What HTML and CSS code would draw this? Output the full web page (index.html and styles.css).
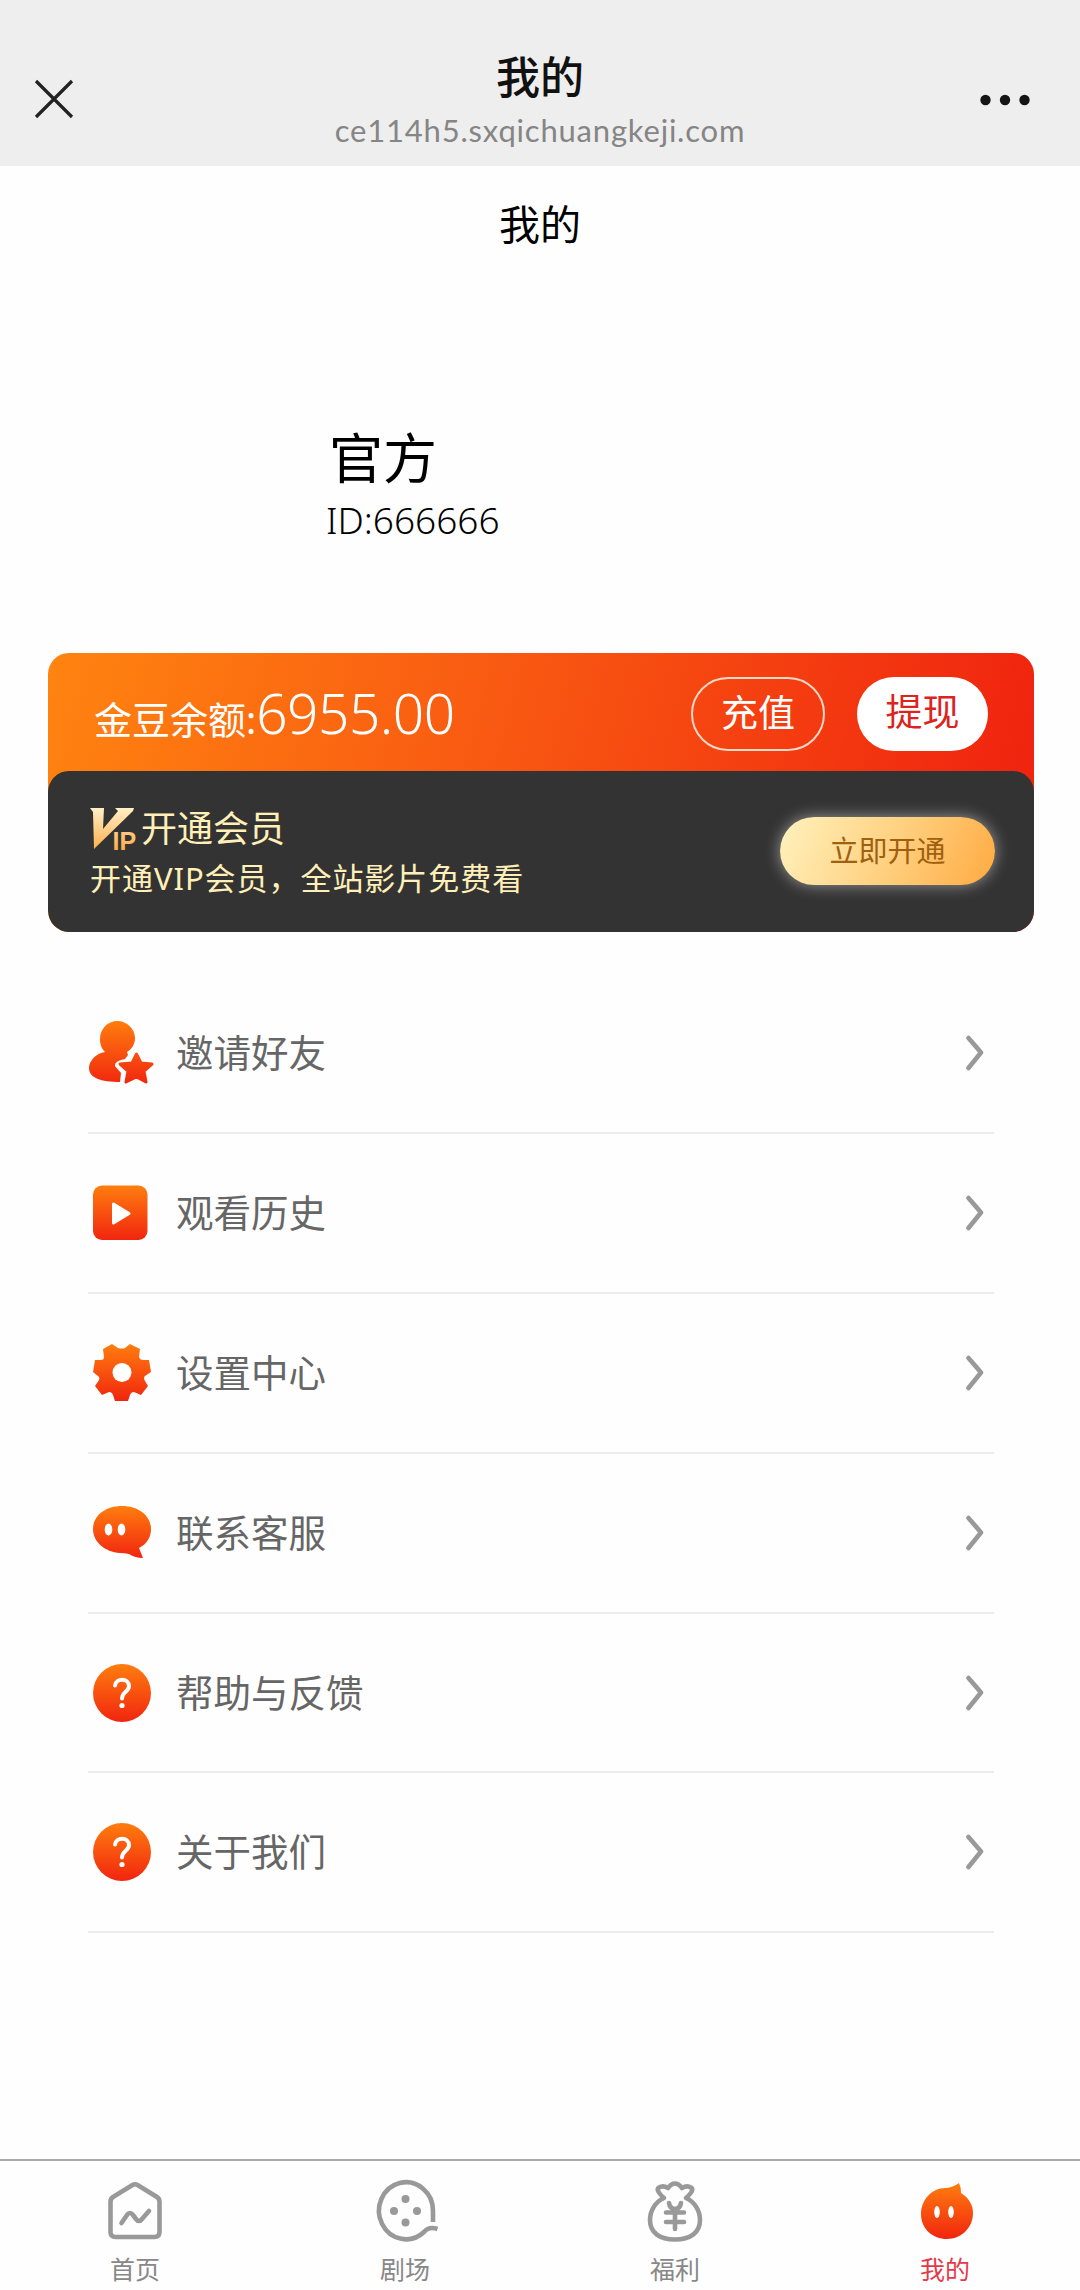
FILE: index.html
```html
<!DOCTYPE html>
<html lang="zh-CN">
<head>
<meta charset="utf-8">
<title>我的</title>
<link rel="stylesheet" href="styles.css">
</head>
<body>
<svg class="defs" width="0" height="0" aria-hidden="true">
  <defs>
    <linearGradient id="fire" x1="0" y1="0" x2="0" y2="1"><stop offset="0" stop-color="#ff7d0e"/><stop offset="1" stop-color="#f1250f"/></linearGradient>
    <linearGradient id="person" gradientUnits="userSpaceOnUse" x1="0" y1="0" x2="0" y2="64"><stop offset="0" stop-color="#ff7d0e"/><stop offset="1" stop-color="#f1250f"/></linearGradient>
    <linearGradient id="gold" gradientUnits="userSpaceOnUse" x1="0" y1="0" x2="0" y2="42"><stop offset="0" stop-color="#fff0c8"/><stop offset="1" stop-color="#ffac4a"/></linearGradient>
  </defs>
</svg>
<header class="browser">
  <svg class="close" viewBox="0 0 40 40"><path d="M2 2L38 38M38 2L2 38"/></svg>
  <div class="heading">
    <div class="heading-title">我的</div>
    <div class="heading-url">ce114h5.sxqichuangkeji.com</div>
  </div>
  <svg class="more" viewBox="0 0 50 12"><circle cx="5.500" cy="6" r="5.200"/><circle cx="25" cy="6" r="5.200"/><circle cx="44.500" cy="6" r="5.200"/></svg>
</header>
<h1 class="page-title">我的</h1>
<section class="profile">
  <div class="name">官方</div>
  <div class="uid">ID:666666</div>
</section>
<section class="wallet">
  <div class="balance">
    <div class="amount"><span class="amount-label">金豆余额:</span><span class="amount-value">6955.00</span></div>
    <button class="pill recharge">充值</button>
    <button class="pill withdraw">提现</button>
  </div>
  <div class="vip">
    <div class="vip-copy">
      <div class="vip-title">
        <svg class="vip-icon" viewBox="0 0 45 42"><path fill="url(#gold)" d="M0 0H14L13 21L28 3L25 0H44L43 3L4 41L3 4Z"/><text x="22.500" y="41.500" fill="url(#gold)">IP</text></svg>
        <span>开通会员</span>
      </div>
      <div class="vip-sub">开通VIP会员，全站影片免费看</div>
    </div>
    <button class="activate">立即开通</button>
  </div>
</section>
<nav class="menu">
  <a class="row">
    <svg class="icon" viewBox="0 0 66 64"><g fill="url(#person)"><path d="M28.500 0C18.500 0 11 8 11 18C11 24 13 28 16 31C7 32 0 40 0 47C0 57 12 61 31 61L32 52L26 45Q25 40 36 38L39 34L38 31C43 28 46 23 46 17C46 8 38 0 28.500 0Z"/><path stroke="url(#person)" stroke-width="3" stroke-linejoin="round" d="M47.500 33L52 42L63 43L55 50L57 61L47.500 56L37 61L39 50L31 43L43 42Z"/></g></svg>
    <span class="label">邀请好友</span><svg class="chev" viewBox="0 0 18 36"><path d="M2.500 3L15 17.500L2.500 33"/></svg>
  </a>
  <a class="row">
    <svg class="icon" viewBox="0 0 66 64"><rect x="4" y="4.500" width="54.500" height="54.500" rx="9" fill="url(#fire)"/><path d="M24.500 23V42L40 32.500Z" fill="#fff" stroke="#fff" stroke-width="3" stroke-linejoin="round"/></svg>
    <span class="label">观看历史</span><svg class="chev" viewBox="0 0 18 36"><path d="M2.500 3L15 17.500L2.500 33"/></svg>
  </a>
  <a class="row">
    <svg class="icon" viewBox="0 0 66 64"><path fill="url(#fire)" d="M23 3L29 7Q33 8 36 7L41 3L51 8L50 16Q51 19 54 19L60 19L62 31L56 35Q54 37 56 40L59 45L52 54L45 51Q42 51 41 54L39 60H26L24 54Q23 51 20 51L13 54L6 45L10 39Q11 36 9 35L4 31L6 19H12Q15 19 15 16L14 8Z"/><circle cx="33" cy="31.500" r="9.500" fill="#fff"/></svg>
    <span class="label">设置中心</span><svg class="chev" viewBox="0 0 18 36"><path d="M2.500 3L15 17.500L2.500 33"/></svg>
  </a>
  <a class="row">
    <svg class="icon" viewBox="0 0 66 64"><path fill="url(#fire)" d="M33 5C16 5 4 15 4 28C4 41 16 51 31 52Q36 52 40 53Q46 57 54 57L50 47C58 43 62 36 62 28C62 15 50 5 33 5Z"/><ellipse cx="19.500" cy="28.500" rx="3.800" ry="6" fill="#fff"/><ellipse cx="32.500" cy="28.500" rx="3.800" ry="6" fill="#fff"/></svg>
    <span class="label">联系客服</span><svg class="chev" viewBox="0 0 18 36"><path d="M2.500 3L15 17.500L2.500 33"/></svg>
  </a>
  <a class="row">
    <svg class="icon" viewBox="0 0 66 64"><circle cx="33" cy="32" r="29" fill="url(#fire)"/><path class="ask" d="M26 24.500C27 16.500 40 17 40 25C40 31 33 30.500 33 37.500"/><circle cx="33" cy="44.500" r="2.600" fill="#fff"/></svg>
    <span class="label">帮助与反馈</span><svg class="chev" viewBox="0 0 18 36"><path d="M2.500 3L15 17.500L2.500 33"/></svg>
  </a>
  <a class="row">
    <svg class="icon" viewBox="0 0 66 64"><circle cx="33" cy="32" r="29" fill="url(#fire)"/><path class="ask" d="M26 24.500C27 16.500 40 17 40 25C40 31 33 30.500 33 37.500"/><circle cx="33" cy="44.500" r="2.600" fill="#fff"/></svg>
    <span class="label">关于我们</span><svg class="chev" viewBox="0 0 18 36"><path d="M2.500 3L15 17.500L2.500 33"/></svg>
  </a>
</nav>
<footer class="tabs">
  <a class="tab">
    <svg class="tab-icon" viewBox="0 0 64 64"><path d="M29.500 5Q32 3.500 34.500 5L54 17Q56.500 18.500 56.500 22V52Q56.500 57 51.500 57H12.500Q7.500 57 7.500 52V22Q7.500 18.500 10 17Z"/><path d="M18.500 43L24 35Q27 31 30 35L33 39Q36 43 39 39L46 31"/></svg>
    <span>首页</span>
  </a>
  <a class="tab">
    <svg class="tab-icon" viewBox="0 0 64 64"><path stroke-linecap="butt" d="M60 42V31A27 28.500 0 1 0 51 52Q56 46 64.500 49"/><g class="dots"><circle cx="32.500" cy="19" r="4"/><circle cx="21" cy="31" r="4"/><circle cx="44" cy="31" r="4"/><circle cx="32.500" cy="42.500" r="4"/></g></svg>
    <span>剧场</span>
  </a>
  <a class="tab">
    <svg class="tab-icon" viewBox="0 0 64 64"><path d="M21 18Q12 10 16 7.500Q20 5 25 8Q32 -1 39 8Q44 5 48 7.500Q52 10 43 18C52 22 57 31 57 40C57 53 47 59.500 32 59.500C17 59.500 7 53 7 40C7 31 12 22 21 18Z"/><path d="M26 23Q27 29 32 29Q37 29 38 23M32 29V49M23 32.500H41M23 42H41"/></svg>
    <span>福利</span>
  </a>
  <a class="tab active">
    <svg class="tab-icon" viewBox="-2 0 64 64"><path class="flame" fill="url(#fire)" d="M44 3Q46 7 46 13C54 18 58 25 58 33C58 48 46 59 32 59C18 59 6 49 6 34C6 20 17 8 30 8Q37 8 44 3Z"/><ellipse class="eye" cx="22" cy="32" rx="2.800" ry="6"/><ellipse class="eye" cx="36" cy="32" rx="2.800" ry="6"/></svg>
    <span>我的</span>
  </a>
</footer>
</body>
</html>
```
FILE: styles.css
```css
* { box-sizing: border-box; }
body {
  margin: 0;
  width: 1080px;
  height: 2290px;
  display: flex;
  flex-direction: column;
  background: #fefefe;
  color: #000;
  font-family: "KaiTi", "AR PL UKai CN", "Noto Sans", "Noto Sans CJK SC", sans-serif;
}
.defs { display: block; flex: none; height: 0; }
button { border: 0; padding: 0; margin: 0; font-family: inherit; }
.browser {
  height: 166px;
  flex: none;
  background: #eee;
  display: grid;
  grid-template-columns: 100px 1fr 100px;
  padding-top: 48px;
}
.close { width: 40px; height: 40px; margin: 31px 0 0 34px; fill: none; stroke: #222; stroke-width: 3.2; }
.more { width: 50px; height: 12px; margin-top: 46px; fill: #151515; }
.heading { text-align: center; }
.heading-title { font-size: 44px; line-height: 58px; font-weight: 500; color: #111; }
.heading-url { font-family: Lato, sans-serif; font-size: 31px; line-height: 38px; margin-top: 5px; color: #858585; letter-spacing: .8px; }
.page-title { margin: 0; height: 118px; text-align: center; font-size: 41px; line-height: 116px; font-weight: 400; }
.profile { height: 369px; flex: none; padding: 140px 0 0 326px; }
.name { font-size: 54px; line-height: 68px; margin-left: 3px; }
.uid { font-size: 37px; line-height: 50px; margin-top: 3px; font-weight: 300; }
.wallet {
  width: 986px;
  height: 279px;
  flex: none;
  margin-left: 48px;
  border-radius: 21px;
  overflow: hidden;
  background: linear-gradient(105deg, #ff8410 0%, #f95b12 42%, #f0240f 95%);
}
.balance { display: flex; height: 118px; padding: 24px 46px 0 46px; align-items: flex-start; color: #fff; }
.amount { flex: 1; display: flex; align-items: baseline; line-height: 72px; }
.amount-label { font-size: 38px; }
.amount-value { font-size: 55px; font-weight: 300; letter-spacing: -.5px; }
.pill { height: 74px; border-radius: 37px; font-size: 37px; line-height: 66px; padding-bottom: 3px; }
.recharge { width: 134px; background: none; border: 2px solid #ffd9c6; color: #fff; margin-right: 32px; }
.withdraw { width: 131px; background: #fff; color: #dc231e; padding-bottom: 5px; }
.vip { display: flex; height: 161px; border-radius: 21px; background: #333; padding: 0 39px 0 42px; color: #ffefb8; }
.vip-copy { flex: 1; padding-top: 34px; }
.vip-title { display: flex; align-items: center; gap: 6px; height: 48px; font-size: 36px; line-height: 48px; }
.vip-icon { width: 45px; height: 42px; overflow: visible; }
.vip-icon text { font: 700 25px "Liberation Sans", sans-serif; }
.vip-sub { font-size: 31px; line-height: 44px; margin-top: 3px; white-space: nowrap; letter-spacing: .95px; }
.activate {
  width: 215px;
  height: 68px;
  margin-top: 46px;
  border-radius: 34px;
  font-size: 29px;
  line-height: 68px;
  color: #a06010;
  background: linear-gradient(115deg, #fff2be 0%, #ffd384 48%, #ffae48 95%);
  box-shadow: 0 0 15px rgba(255, 255, 255, .5);
}
.menu { flex: 1; padding: 42px 86px 0 88px; }
.row { display: flex; align-items: center; height: 159.9px; border-bottom: 2px solid #ececec; }
.icon { width: 66px; height: 64px; margin: 0 21px 0 1px; }
.label { flex: 1; font-size: 37.5px; line-height: 50px; color: #666; }
.chev { width: 18px; height: 36px; margin-right: 10px; fill: none; stroke: #999; stroke-width: 4.6; stroke-linecap: round; stroke-linejoin: round; }
.ask { fill: none; stroke: #fff; stroke-width: 4; stroke-linecap: round; }
.tabs { display: grid; grid-template-columns: repeat(4, 1fr); height: 131px; flex: none; border-top: 2px solid #aaa; }
.tab { display: flex; flex-direction: column; align-items: center; padding-top: 19px; font-size: 25px; line-height: 34px; color: #888; gap: 8px; }
.tab-icon { width: 64px; height: 64px; flex: none; overflow: visible; fill: none; stroke: #999; stroke-width: 4.6; stroke-linecap: round; stroke-linejoin: round; }
.dots { fill: #999; stroke: none; }
.flame { stroke: none; }
.eye { fill: #fff; stroke: none; }
.active { color: #e23b4b; }
```
